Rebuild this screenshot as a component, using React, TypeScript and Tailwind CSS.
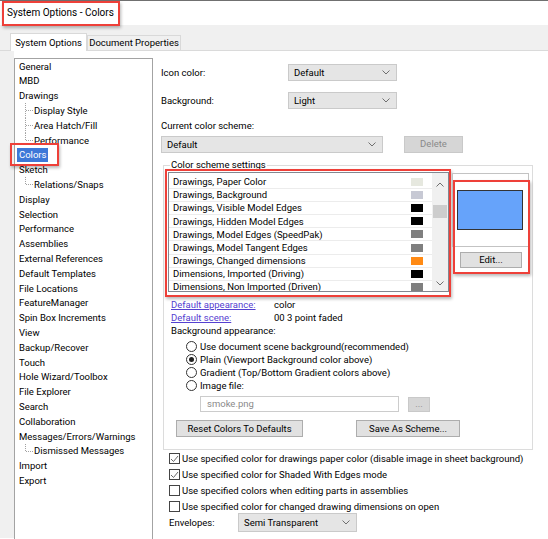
import React from 'react'

type TreeItem = { label: string; child?: boolean; last?: boolean; selected?: boolean }

const treeItems: TreeItem[] = [
  { label: 'General' },
  { label: 'MBD' },
  { label: 'Drawings' },
  { label: 'Display Style', child: true },
  { label: 'Area Hatch/Fill', child: true },
  { label: 'Performance', child: true, last: true },
  { label: 'Colors', selected: true },
  { label: 'Sketch' },
  { label: 'Relations/Snaps', child: true, last: true },
  { label: 'Display' },
  { label: 'Selection' },
  { label: 'Performance' },
  { label: 'Assemblies' },
  { label: 'External References' },
  { label: 'Default Templates' },
  { label: 'File Locations' },
  { label: 'FeatureManager' },
  { label: 'Spin Box Increments' },
  { label: 'View' },
  { label: 'Backup/Recover' },
  { label: 'Touch' },
  { label: 'Hole Wizard/Toolbox' },
  { label: 'File Explorer' },
  { label: 'Search' },
  { label: 'Collaboration' },
  { label: 'Messages/Errors/Warnings' },
  { label: 'Dismissed Messages', child: true, last: true },
  { label: 'Import' },
  { label: 'Export' },
]

const schemeRows: [string, string][] = [
  ['Drawings, Paper Color', 'bg-[#e6e8df]'],
  ['Drawings, Background', 'bg-[#c7c9d4]'],
  ['Drawings, Visible Model Edges', 'bg-black'],
  ['Drawings, Hidden Model Edges', 'bg-black'],
  ['Drawings, Model Edges (SpeedPak)', 'bg-[#7f7f7f]'],
  ['Drawings, Model Tangent Edges', 'bg-[#7f7f7f]'],
  ['Drawings, Changed dimensions', 'bg-[#ff8a14]'],
  ['Dimensions, Imported (Driving)', 'bg-black'],
  ['Dimensions, Non Imported (Driven)', 'bg-[#7f7f7f]'],
]

// red highlight boxes drawn on top of the screenshot
function Annot({ className }: { className: string }) {
  return (
    <span
      className={`pointer-events-none absolute border-2 border-[#ee4039] shadow-[1px_2px_3px_rgba(0,0,0,0.28)] ${className}`}
    />
  )
}

function Chevron({ up = false }: { up?: boolean }) {
  return (
    <svg width="8" height="5" viewBox="0 0 8 5" className="shrink-0">
      <path
        d={up ? 'M0.5 4.5 L4 1 L7.5 4.5' : 'M0.5 0.5 L4 4 L7.5 0.5'}
        fill="none"
        stroke="#6f6f6f"
        strokeWidth="1"
      />
    </svg>
  )
}

function Select({ value, className }: { value: string; className: string }) {
  return (
    <div
      className={`flex items-center justify-between border border-[#cacaca] bg-[#e5e5e5] pl-[5px] pr-[6px] ${className}`}
    >
      <span>{value}</span>
      <Chevron />
    </div>
  )
}

function Btn({
  children,
  className,
  disabled = false,
}: {
  children: React.ReactNode
  className: string
  disabled?: boolean
}) {
  return (
    <button
      type="button"
      className={`flex items-center justify-center border ${
        disabled ? 'border-[#c9c9c9] bg-[#d6d6d6] text-[#8a8a8a]' : 'border-[#adadad] bg-[#e1e1e1]'
      } ${className}`}
    >
      {children}
    </button>
  )
}

function Radio({ label, checked = false }: { label: string; checked?: boolean }) {
  return (
    <div className="flex h-[13px] items-center pl-[15px]">
      <span className="flex h-[11px] w-[11px] items-center justify-center rounded-full border border-[#333] bg-white">
        {checked && <span className="h-[5px] w-[5px] rounded-full bg-[#222]" />}
      </span>
      <span className="ml-[3px]">{label}</span>
    </div>
  )
}

function Check({ label, checked = false }: { label: string; checked?: boolean }) {
  return (
    <div className="flex h-[15.8px] items-center">
      <span className="flex h-[11px] w-[11px] items-center justify-center border border-[#444] bg-white">
        {checked && (
          <svg width="9" height="8" viewBox="0 0 9 8">
            <path d="M1 4 L3.5 6.5 L8 1" fill="none" stroke="#6a6a6a" strokeWidth="1" />
          </svg>
        )}
      </span>
      <span className="ml-[2px]">{label}</span>
    </div>
  )
}

function TreeRow({ item }: { item: TreeItem }) {
  return (
    <div className="flex h-[14.8px] items-center pl-[4px]">
      {item.child && (
        <svg width="15" height="14.8" viewBox="0 0 15 14.8" className="shrink-0">
          <line
            x1="6.5"
            y1="0"
            x2="6.5"
            y2={item.last ? 7.4 : 14.8}
            stroke="#a0a0a0"
            strokeDasharray="1 1"
          />
          <line x1="7" y1="7.5" x2="14" y2="7.5" stroke="#a0a0a0" strokeDasharray="1 1" />
        </svg>
      )}
      {item.selected ? (
        <span className="relative -ml-[2px] bg-[#3d78d8] px-[2px] leading-[14px] text-white">
          {item.label}
          <Annot className="-left-[7px] -right-[11px] -top-[5px] -bottom-[4px]" />
        </span>
      ) : (
        <span>{item.label}</span>
      )}
    </div>
  )
}

export default function App() {
  return (
    <div className="relative h-[539px] w-[548px] overflow-hidden bg-white font-['Roboto',sans-serif] text-[9.5px] leading-none text-black">
      <div className="h-px bg-[#707070]" />

      {/* window title */}
      <div className="flex h-[24px] items-center pl-[7px]">
        <span className="relative text-[10px] leading-[12px]">
          System Options - Colors
          <Annot className="-left-[5px] -right-[6px] -top-[6px] -bottom-[7px]" />
        </span>
      </div>

      {/* tabs */}
      <div className="flex h-[26px] items-end border-b border-[#dadada] bg-[#f0f0f0] pl-[10px]">
        <div className="-mb-px flex h-[18px] w-[77px] items-center justify-center border border-b-0 border-[#d9d9d9] bg-white">
          System Options
        </div>
        <div className="flex h-[15px] w-[94px] items-center justify-center border border-b-0 border-[#d9d9d9] bg-[#f0f0f0]">
          Document Properties
        </div>
      </div>

      <div className="flex h-[487px]">
        <div className="w-[14px] shrink-0 bg-[#f0f0f0]" />

        {/* options tree */}
        <div className="mt-[7px] h-[490px] w-[139px] shrink-0 border border-b-0 border-[#a3a3a3]">
          {treeItems.map((item, i) => (
            <TreeRow key={i} item={item} />
          ))}
        </div>

        {/* colors page */}
        <div className="flex-1 pl-[8px]">
          <div className="mt-[13px] flex h-[17px] items-center">
            <span className="w-[127px]">Icon color:</span>
            <Select value="Default" className="h-[17px] w-[109px]" />
          </div>
          <div className="mt-[11px] flex h-[17px] items-center">
            <span className="w-[127px]">Background:</span>
            <Select value="Light" className="h-[17px] w-[109px]" />
          </div>
          <div className="mt-[10px] flex h-[14px] items-center">Current color scheme:</div>
          <div className="mt-[3px] flex h-[17px] items-center">
            <Select value="Default" className="h-[17px] w-[222px]" />
            <Btn disabled className="ml-[21px] -mt-px h-[17px] w-[59px]">
              Delete
            </Btn>
          </div>

          <fieldset className="ml-[2px] mt-[6px] w-[370px] border border-[#dcdcdc] pb-[12px] pl-[4px]">
            <legend className="ml-[2px] px-px leading-[12px]">Color scheme settings</legend>

            <div className="mt-px flex items-start">
              <div className="relative">
                <div className="flex h-[120px] w-[281px] overflow-hidden border border-[#828790] bg-white">
                  <div className="flex-1 pt-[3px]">
                    {schemeRows.map(([label, swatch]) => (
                      <div
                        key={label}
                        className="flex h-[13.1px] shrink-0 items-center justify-between border-b border-[#ececec] pl-[4px] pr-[9px]"
                      >
                        <span>{label}</span>
                        <span className={`h-[8px] w-[12px] ${swatch}`} />
                      </div>
                    ))}
                  </div>
                  <div className="flex w-[16px] flex-col items-center bg-[#f0f0f0] pt-[9px]">
                    <Chevron up />
                    <div className="mt-[18px] h-[13px] w-[14px] bg-[#cdcdcd]" />
                    <div className="mt-auto mb-[5px]">
                      <Chevron />
                    </div>
                  </div>
                </div>
                <Annot className="-left-[3px] -right-[2px] -top-[3px] -bottom-[5px]" />
              </div>

              <div className="relative ml-[3px] mt-px w-[77px]">
                <div className="h-[74px] border border-[#c3c3c3] bg-white pl-[4px] pt-[16px]">
                  <div className="h-[40px] w-[66px] border border-[#333] bg-[#66a3fa]" />
                </div>
                <Btn className="ml-[8px] mt-[5px] h-[16px] w-[62px]">Edit...</Btn>
                <Annot className="left-px -right-[1px] top-[7px] -bottom-[6px]" />
              </div>
            </div>

            <div className="pl-[3px]">
              <div className="mt-[6px] flex h-[13px] items-center">
                <span className="w-[103px] text-[#5440d0] underline">Default appearance:</span>
                <span>color</span>
              </div>
              <div className="flex h-[13px] items-center">
                <span className="w-[103px] text-[#5440d0] underline">Default scene:</span>
                <span>00 3 point faded</span>
              </div>
              <div className="flex h-[14px] items-center">Background appearance:</div>
              <div className="mt-[2px]">
                <Radio label="Use document scene background(recommended)" />
                <Radio label="Plain (Viewport Background color above)" checked />
                <Radio label="Gradient (Top/Bottom Gradient colors above)" />
                <Radio label="Image file:" />
              </div>
              <div className="mt-[4px] flex items-center pl-[29px]">
                <div className="flex h-[16px] w-[199px] items-center border border-[#cccccc] bg-white pl-[6px] text-[#8a8a8a]">
                  smoke.png
                </div>
                <Btn disabled className="ml-[9px] h-[15px] w-[22px]">
                  ...
                </Btn>
              </div>
              <div className="mt-[8px] flex items-center pl-[5px]">
                <Btn className="h-[17px] w-[127px]">Reset Colors To Defaults</Btn>
                <Btn className="ml-[53px] h-[17px] w-[104px]">Save As Scheme...</Btn>
              </div>
            </div>
          </fieldset>

          <div className="mt-[1px] pl-[8px]">
            <Check label="Use specified color for drawings paper color (disable image in sheet background)" checked />
            <Check label="Use specified color for Shaded With Edges mode" checked />
            <Check label="Use specified colors when editing parts in assemblies" />
            <Check label="Use specified color for changed drawing dimensions on open" />
            <div className="-mt-px flex h-[19px] items-center">
              <span className="w-[69px]">Envelopes:</span>
              <Select value="Semi Transparent" className="h-[19px] w-[119px]" />
            </div>
          </div>
        </div>
      </div>
    </div>
  )
}
